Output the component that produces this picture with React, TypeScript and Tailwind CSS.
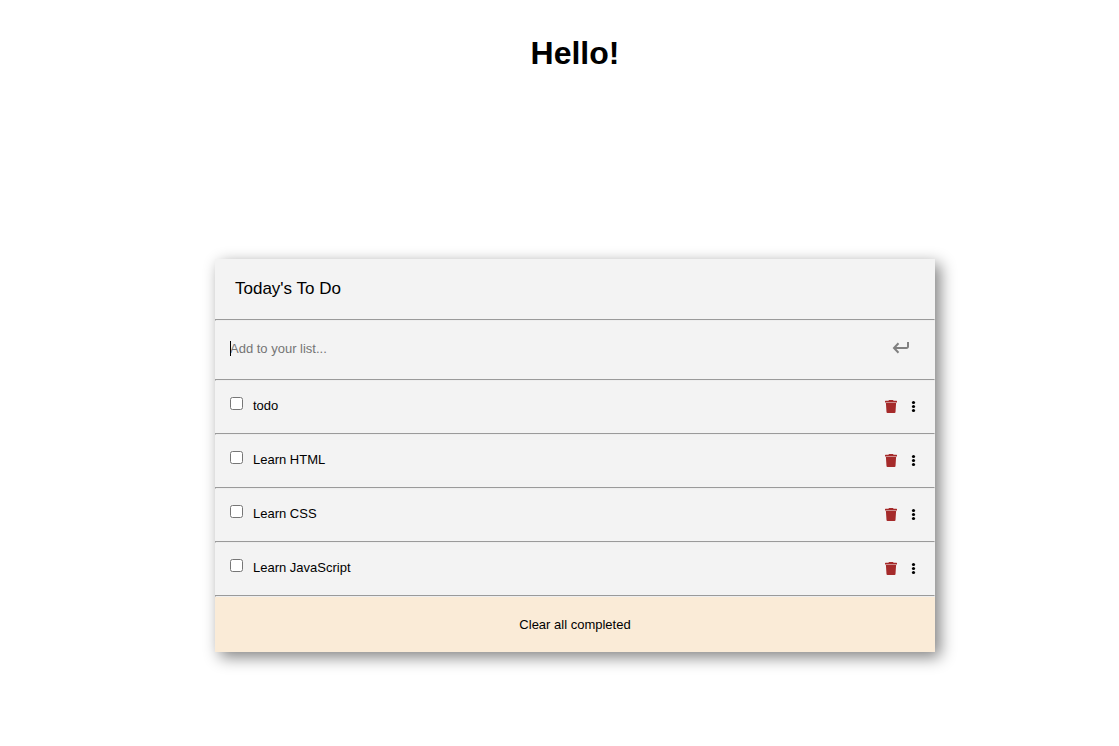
import { useState } from "react";
import type { FormEvent } from "react";

type Task = { id: number; text: string; done: boolean };

const initialTasks: Task[] = [
  { id: 1, text: "todo", done: false },
  { id: 2, text: "Learn HTML", done: false },
  { id: 3, text: "Learn CSS", done: false },
  { id: 4, text: "Learn JavaScript", done: false },
];

function EnterIcon() {
  return (
    <svg width="18" height="14" viewBox="0 0 18 14" fill="none" stroke="currentColor" strokeWidth="2" aria-hidden="true">
      <path d="M16 1v4.500a1.500 1.500 0 0 1-1.500 1.500H2.500M6.500 2.300L2 7l4.500 4.700" />
    </svg>
  );
}

function TrashIcon() {
  return (
    <svg width="12" height="14" viewBox="0 0 12 14" fill="currentColor" aria-hidden="true">
      <path d="M4 1h4l.6 .8H11.500a.5.500 0 0 1 .5.500v1.100H0V2.300a.5.500 0 0 1 .5-.5h2.900z" />
      <path d="M.9 4h10.200l-.6 9a1 1 0 0 1-1 1h-7a1 1 0 0 1-1-1z" />
    </svg>
  );
}

function DotsIcon() {
  return (
    <svg width="3" height="14" viewBox="0 0 3 14" fill="currentColor" className="overflow-visible" aria-hidden="true">
      <circle cx="1.500" cy="3.500" r="1.600" />
      <circle cx="1.500" cy="7.500" r="1.600" />
      <circle cx="1.500" cy="11.500" r="1.600" />
    </svg>
  );
}

function Rule() {
  return <hr className="h-0.5 border border-t-[#9a9a9a] border-r-[#eeeeee] border-b-[#eeeeee] border-l-[#9a9a9a]" />;
}

export default function App() {
  const [tasks, setTasks] = useState<Task[]>(initialTasks);
  const [draft, setDraft] = useState("");

  const addTask = (event: FormEvent) => {
    event.preventDefault();
    const text = draft.trim();
    if (!text) return;
    setTasks([...tasks, { id: Date.now(), text, done: false }]);
    setDraft("");
  };

  const toggle = (id: number) =>
    setTasks(tasks.map((task) => (task.id === id ? { ...task, done: !task.done } : task)));

  return (
    <div className="flex min-h-screen flex-col items-center bg-white pt-[33px] pb-8 pl-[31px] font-['Liberation_Sans',Arial,sans-serif] text-[13px] leading-5 text-black">
      <h1 className="text-[32px] leading-10 font-bold">Hello!</h1>

      <main className="mt-[186px] w-full max-w-[720px] bg-[#f3f3f3] shadow-[5px_5px_15px_gray]">
        <h2 className="px-5 py-[18px] text-[17px] leading-6">Today&apos;s To Do</h2>
        <Rule />

        <form onSubmit={addTask} className="flex h-[58px] items-center justify-between pr-[25px] pb-1 pl-[15px]">
          <div className="relative flex grow items-center">
            <input
              autoFocus
              type="text"
              aria-label="Add to your list"
              placeholder="Add to your list..."
              value={draft}
              onChange={(event) => setDraft(event.target.value)}
              className="peer h-6 grow bg-transparent outline-none placeholder:text-[#757575] placeholder-shown:caret-transparent"
            />
            <span className="pointer-events-none absolute left-0 hidden h-[15px] w-px bg-black peer-focus:peer-placeholder-shown:block" />
          </div>
          <button type="submit" aria-label="Add task" className="text-[#808080]">
            <EnterIcon />
          </button>
        </form>
        <Rule />

        <ul>
          {tasks.map((task) => (
            <li key={task.id}>
              <div className="flex h-[52px] items-center justify-between pr-5 pb-0.5 pl-[15px]">
                <label className="flex items-start gap-2.5">
                  <input
                    type="checkbox"
                    checked={task.done}
                    onChange={() => toggle(task.id)}
                    className="mt-px size-[13px]"
                  />
                  <span className={task.done ? "text-gray-500 line-through" : ""}>{task.text}</span>
                </label>
                <div className="flex items-center gap-[15px]">
                  <button
                    type="button"
                    aria-label={`Delete ${task.text}`}
                    onClick={() => setTasks(tasks.filter((other) => other.id !== task.id))}
                    className="text-[#a52a2a]"
                  >
                    <TrashIcon />
                  </button>
                  <button type="button" aria-label={`Options for ${task.text}`}>
                    <DotsIcon />
                  </button>
                </div>
              </div>
              <Rule />
            </li>
          ))}
        </ul>

        <button
          type="button"
          onClick={() => setTasks(tasks.filter((task) => !task.done))}
          className="block h-[55px] w-full bg-[#faebd7] text-center"
        >
          Clear all completed
        </button>
      </main>
    </div>
  );
}
